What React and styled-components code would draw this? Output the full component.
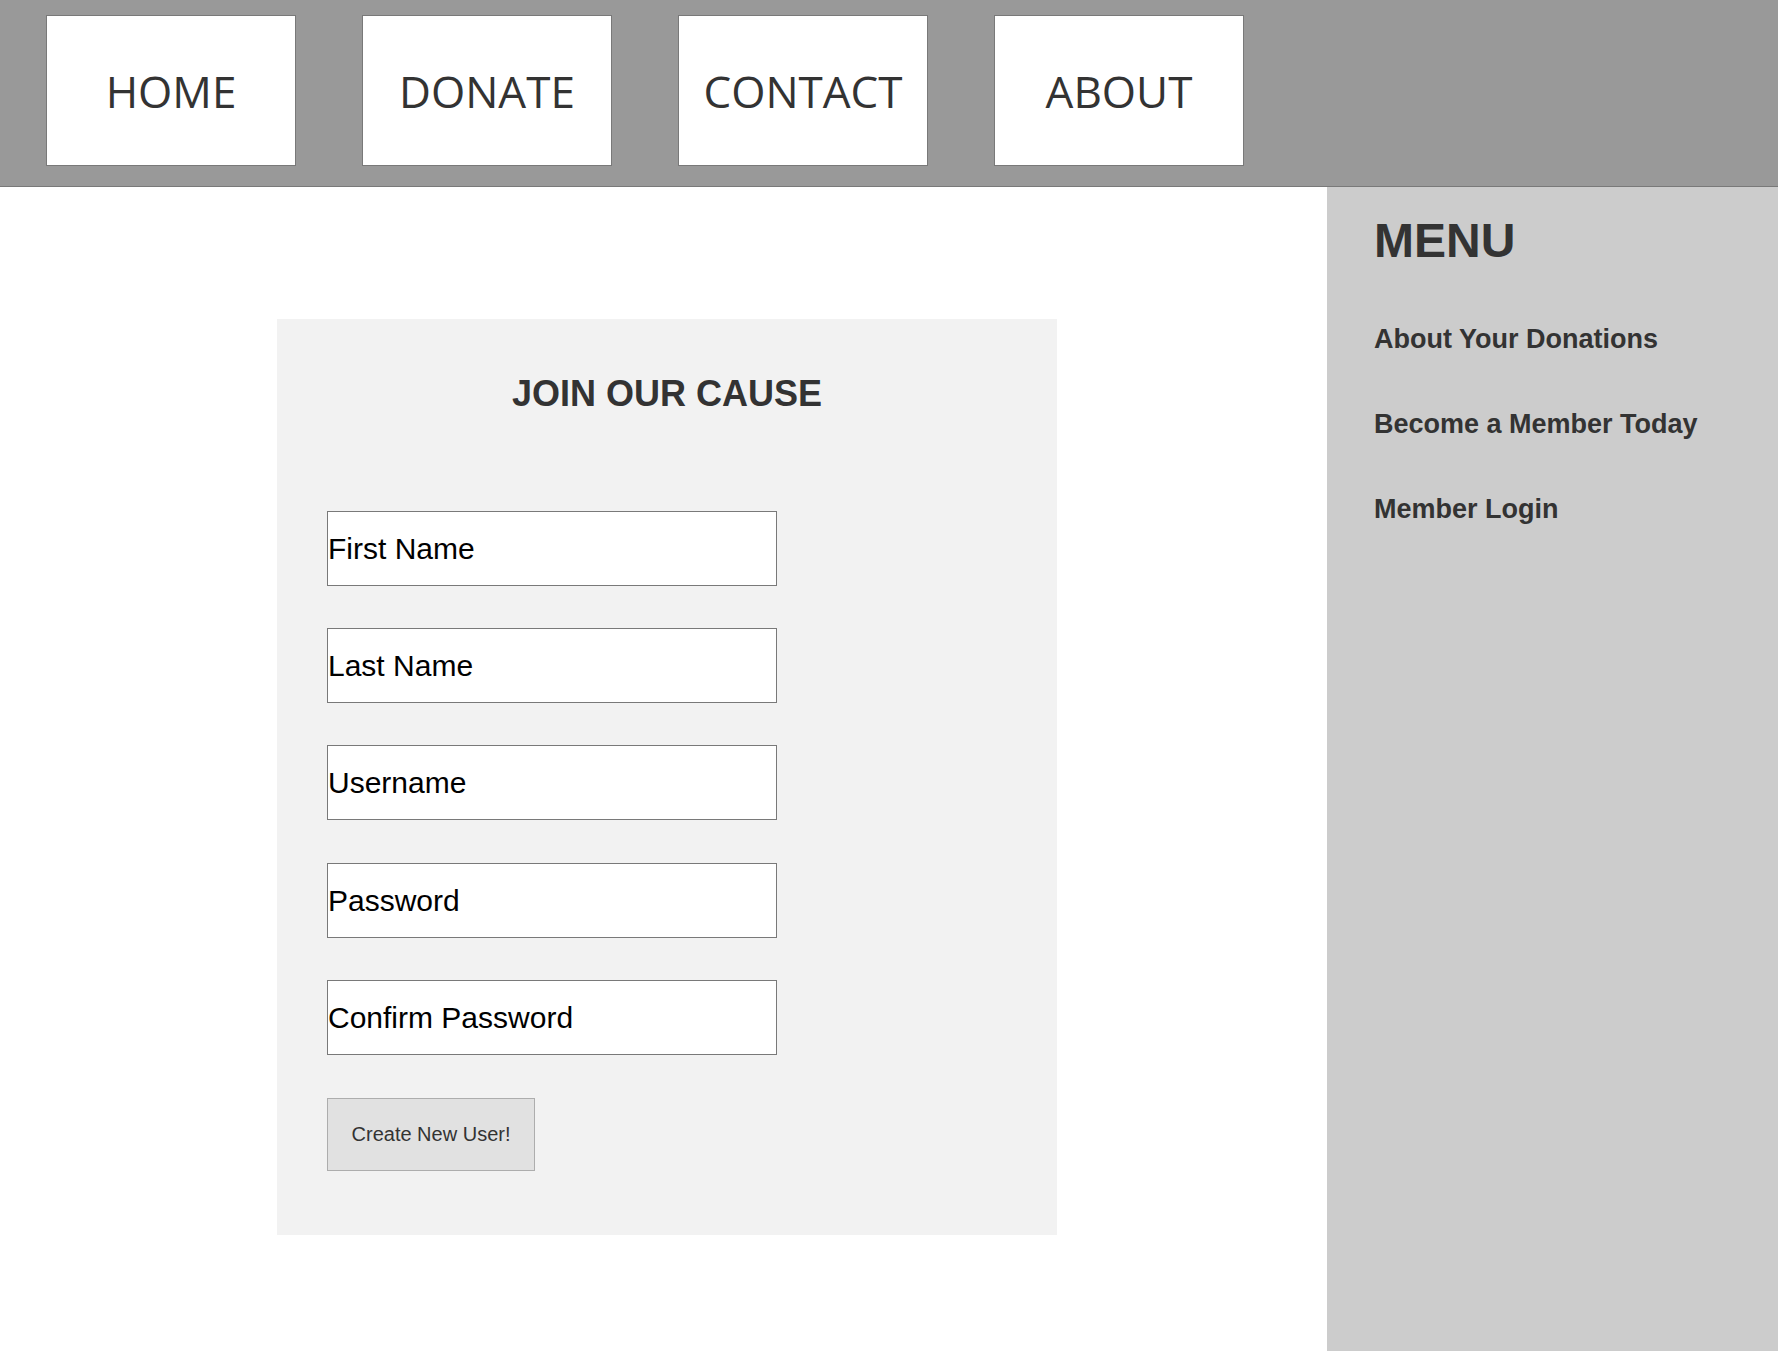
import React from "react";
import styled, { createGlobalStyle } from "styled-components";

const GlobalStyle = createGlobalStyle`
  *, *::before, *::after { box-sizing: border-box; }
  body {
    margin: 0;
    background: #fff;
    color: #333;
    font-family: Arial, "Liberation Sans", sans-serif;
  }
`;

const Page = styled.div`
  display: flex;
  flex-direction: column;
  min-height: 100vh;
`;

const Header = styled.header`
  background: #999;
  border-bottom: 1px solid #797979;
  padding: 15px 46px 20px;
`;

const NavList = styled.ul`
  display: flex;
  flex-wrap: wrap;
  gap: 16px 66px;
  margin: 0;
  padding: 0;
  list-style: none;
`;

const NavLink = styled.a`
  display: flex;
  align-items: center;
  justify-content: center;
  width: 250px;
  height: 151px;
  border: 1px solid #797979;
  background: #fff;
  color: #333;
  font-family: "Ink Free", "Open Sans", sans-serif;
  font-size: 44px;
  text-decoration: none;
`;

const Body = styled.div`
  display: flex;
  flex: 1;
`;

const Main = styled.main`
  flex: 1;
  padding: 132px 0 80px 7px;
`;

const Card = styled.form`
  display: flex;
  flex-direction: column;
  align-items: flex-start;
  gap: 43px;
  max-width: 780px;
  margin: 0 auto;
  padding: 54px 50px 64px;
  background: #f2f2f2;
`;

const Title = styled.h1`
  align-self: stretch;
  margin: 0 0 53px;
  font-size: 36px;
  line-height: 42px;
  text-align: center;
`;

const FieldGroup = styled.div`
  display: flex;
  flex-direction: column;
  gap: 42px;
`;

const Field = styled.input`
  width: 450px;
  height: 75px;
  padding: 0;
  border: 1px solid #797979;
  border-radius: 0;
  background: #fff;
  color: #000;
  font-family: inherit;
  font-size: 30px;

  &::placeholder {
    color: #000;
    opacity: 1;
  }
`;

const SubmitButton = styled.button`
  width: 208px;
  height: 73px;
  padding: 0;
  border: 1px solid #adadad;
  border-radius: 0;
  background: #e1e1e1;
  color: #333;
  font-family: inherit;
  font-size: 20px;
`;

const Sidebar = styled.aside`
  width: 451px;
  padding: 26px 47px;
  background: #ccc;
`;

const MenuTitle = styled.h2`
  margin: 0 0 54px;
  font-size: 48px;
  line-height: 56px;
`;

const MenuList = styled.ul`
  display: flex;
  flex-direction: column;
  gap: 53px;
  margin: 0;
  padding: 0;
  list-style: none;
`;

const MenuLink = styled.a`
  display: block;
  color: #333;
  font-size: 27px;
  font-weight: bold;
  line-height: 32px;
  text-decoration: none;
`;

const navItems = ["HOME", "DONATE", "CONTACT", "ABOUT"];

const menuItems = ["About Your Donations", "Become a Member Today", "Member Login"];

const fieldGroups = [
  [
    { name: "firstName", label: "First Name", type: "text" },
    { name: "lastName", label: "Last Name", type: "text" },
    { name: "username", label: "Username", type: "text" },
  ],
  [
    { name: "password", label: "Password", type: "password" },
    { name: "confirmPassword", label: "Confirm Password", type: "password" },
  ],
];

export default function App() {
  return (
    <Page>
      <GlobalStyle />
      <Header>
        <nav aria-label="Main">
          <NavList>
            {navItems.map((item) => (
              <li key={item}>
                <NavLink href={`#${item.toLowerCase()}`}>{item}</NavLink>
              </li>
            ))}
          </NavList>
        </nav>
      </Header>
      <Body>
        <Main>
          <Card onSubmit={(event) => event.preventDefault()}>
            <Title>JOIN OUR CAUSE</Title>
            {fieldGroups.map((fields) => (
              <FieldGroup key={fields[0].name}>
                {fields.map(({ name, label, type }) => (
                  <Field key={name} name={name} type={type} placeholder={label} aria-label={label} />
                ))}
              </FieldGroup>
            ))}
            <SubmitButton type="submit">Create New User!</SubmitButton>
          </Card>
        </Main>
        <Sidebar>
          <MenuTitle>MENU</MenuTitle>
          <MenuList>
            {menuItems.map((item) => (
              <li key={item}>
                <MenuLink href="#menu">{item}</MenuLink>
              </li>
            ))}
          </MenuList>
        </Sidebar>
      </Body>
    </Page>
  );
}
